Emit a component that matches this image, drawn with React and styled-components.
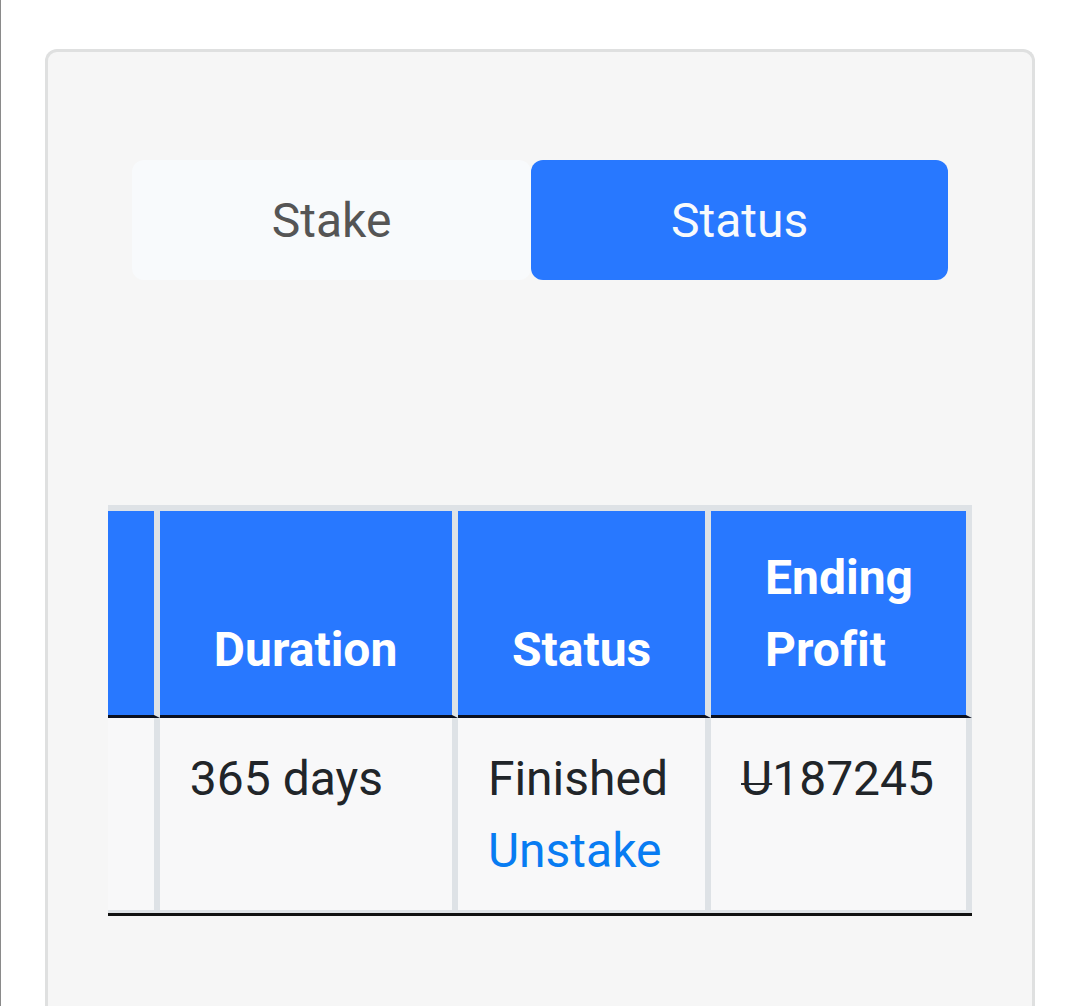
import styled, { createGlobalStyle } from "styled-components";

const GlobalStyle = createGlobalStyle`
  :root {
    --blue: #2878ff;
    --link: #087cf2;
    --line: #dee2e6;
    --dark: #212529;
  }

  * {
    box-sizing: border-box;
  }

  body {
    margin: 0;
    background: #ffffff;
    color: var(--dark);
    font-family: Roboto, sans-serif;
    font-size: 48px;
    line-height: 72px;
    font-variant-ligatures: none;
  }
`;

const Page = styled.main`
  display: flex;
  min-height: 100vh;
  padding: 49px 45px 0 44px;
  border-left: 1px solid #8a8a8a;
`;

const Card = styled.section`
  flex: 1;
  min-width: 0;
  padding: 108px 60px 90px;
  border: 3px solid #dfe0e0;
  border-bottom: 0;
  border-radius: 12px 12px 0 0;
  background: #f6f6f6;
`;

const Tabs = styled.div`
  display: flex;
  margin: 0 24px 225px;
`;

const Tab = styled.button`
  flex: 1 1 auto;
  padding: 25px 48px 23px;
  border: 0;
  border-radius: 12px;
  background: ${({ $active }) => ($active ? "var(--blue)" : "#f8fafc")};
  color: ${({ $active }) => ($active ? "#f8fafc" : "#555555")};
  font: inherit;
  cursor: pointer;
`;

const StakeTable = styled.table`
  width: 100%;
  table-layout: fixed;
  border-collapse: separate;
  border-spacing: 0;
  border-top: 6px solid var(--line);
  border-bottom: 3px solid #111111;
`;

const Column = styled.col`
  width: ${({ $width }) => $width};
`;

const HeadCell = styled.th`
  padding: 31px 0 29px 54px;
  border-right: 6px solid var(--line);
  border-bottom: 3px solid #0b1020;
  background: var(--blue);
  color: #ffffff;
  font-weight: 700;
  text-align: left;
  vertical-align: bottom;
`;

const Cell = styled.td`
  padding: 25px 0 23px 30px;
  border-right: 6px solid var(--line);
  border-bottom: 3px solid var(--line);
  background: #f8f8f9;
  vertical-align: top;
`;

const Link = styled.a`
  display: block;
  color: var(--link);
  text-decoration: none;
`;

// the bar crosses the lower part of the letter, not its middle
const Currency = styled.span`
  text-decoration: underline 2px;
  text-decoration-skip-ink: none;
  text-underline-offset: -12px;
`;

const stakes = [{ duration: "365 days", status: "Finished", profit: "187245" }];

const StakeRow = ({ duration, status, profit }) => {
  return (
    <tr>
      <Cell />
      <Cell>{duration}</Cell>
      <Cell>
        {status}
        <Link href="#unstake">Unstake</Link>
      </Cell>
      <Cell>
        <Currency>U</Currency>
        {profit}
      </Cell>
    </tr>
  );
};

export default function App() {
  return (
    <>
      <GlobalStyle />
      <Page>
        <Card>
          <Tabs role="tablist">
            <Tab type="button" role="tab" aria-selected="false">
              Stake
            </Tab>
            <Tab type="button" role="tab" aria-selected="true" $active>
              Status
            </Tab>
          </Tabs>

          <StakeTable>
            <colgroup>
              <Column $width="6%" />
              <Column $width="34.5%" />
              <Column $width="29.3%" />
              <Column />
            </colgroup>
            <thead>
              <tr>
                <HeadCell />
                <HeadCell>Duration</HeadCell>
                <HeadCell>Status</HeadCell>
                <HeadCell>
                  Ending
                  <br />
                  Profit
                </HeadCell>
              </tr>
            </thead>
            <tbody>
              {stakes.map((stake) => (
                <StakeRow key={stake.duration} {...stake} />
              ))}
            </tbody>
          </StakeTable>
        </Card>
      </Page>
    </>
  );
}
